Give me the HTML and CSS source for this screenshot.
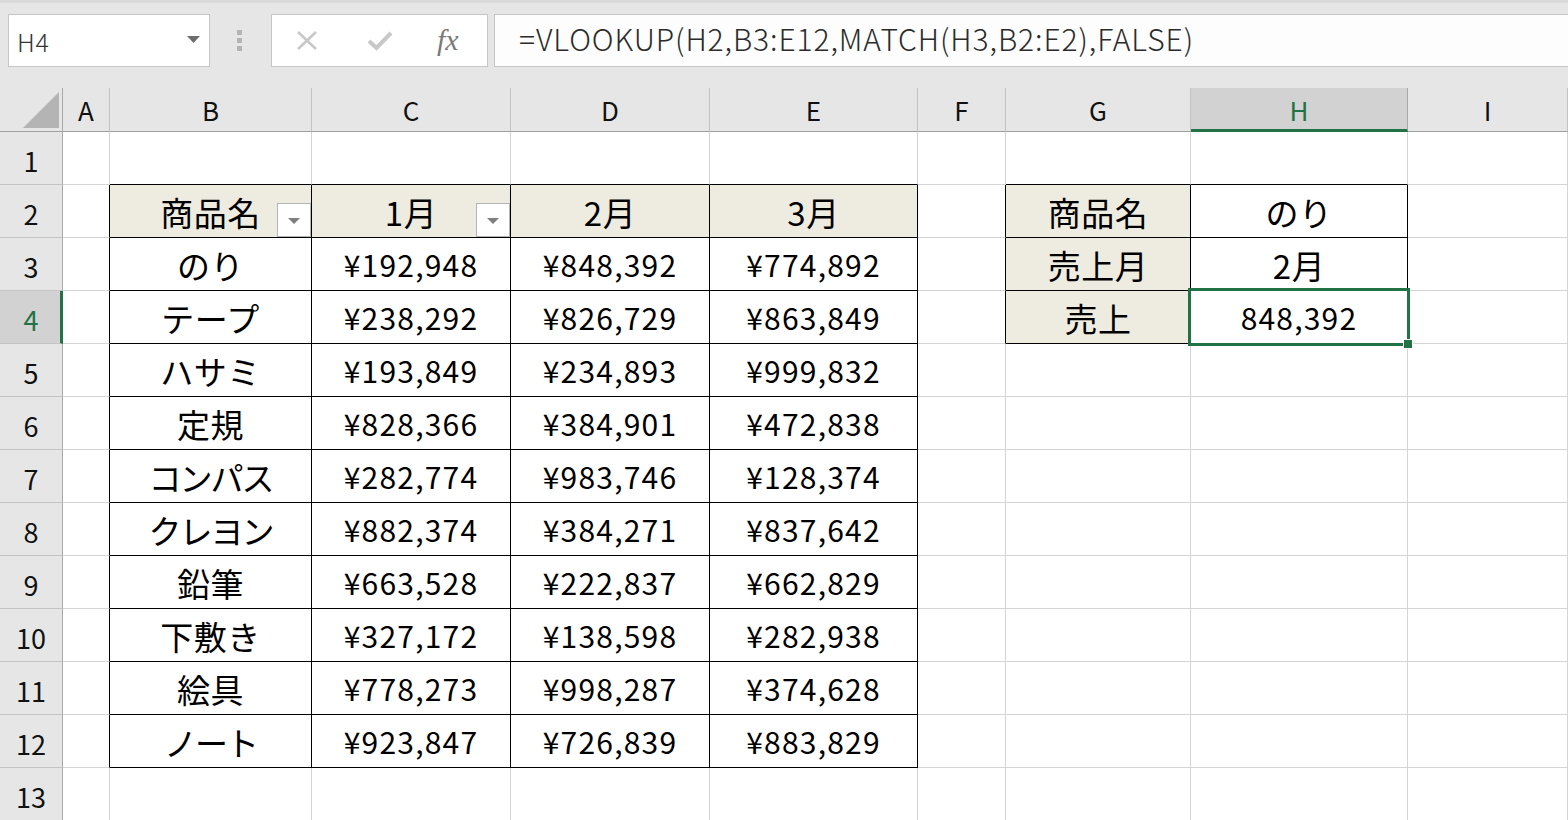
FILE: index.html
```html
<!DOCTYPE html>
<html lang="ja">
<head>
<meta charset="utf-8">
<title>売上検索</title>
<link rel="stylesheet" href="styles.css">
</head>
<body>
<div class="app">
  <div class="toolbar">
    <div class="namebox">
      <span class="name">H4</span>
      <svg class="caret" width="13" height="7" viewBox="0 0 13 7"><polygon points="0,0 13,0 6.5,7" fill="#6d6d6d"/></svg>
    </div>
    <div class="grip"><i></i><i></i><i></i></div>
    <div class="fxbox">
      <svg class="ico-x" width="22" height="21" viewBox="0 0 22 21"><path d="M2 2 L20 19 M20 2 L2 19" stroke="#c8c8c8" stroke-width="2.6" fill="none"/></svg>
      <svg class="ico-ok" width="26" height="21" viewBox="0 0 26 21"><path d="M2 11 L9.5 18 L24 3" stroke="#c8c8c8" stroke-width="4" fill="none"/></svg>
      <span class="fx">fx</span>
    </div>
    <div class="formula">=VLOOKUP(H2,B3:E12,MATCH(H3,B2:E2),FALSE)</div>
  </div>

  <div class="sheet">
    <!-- column headers -->
    <div class="corner"><svg width="62" height="43" viewBox="0 0 62 43"><polygon points="59,4 59,40 23,40" fill="#b4b4b4"/></svg></div>
    <div class="ch">A</div>
    <div class="ch">B</div>
    <div class="ch">C</div>
    <div class="ch">D</div>
    <div class="ch">E</div>
    <div class="ch">F</div>
    <div class="ch">G</div>
    <div class="ch sel">H</div>
    <div class="ch">I</div>

    <!-- row 1 -->
    <div class="rh">1</div>
    <div class="c"></div>
    <div class="c edge-b"></div><div class="c edge-b"></div><div class="c edge-b"></div><div class="c edge-b"></div>
    <div class="c"></div>
    <div class="c edge-b"></div><div class="c edge-b"></div>
    <div class="c"></div>

    <!-- row 2 -->
    <div class="rh">2</div>
    <div class="c edge-r"></div>
    <div class="c tb th jp">商品名<span class="filter"><svg width="12" height="6" viewBox="0 0 12 6"><polygon points="0,0 12,0 6,6" fill="#7f7f7f"/></svg></span></div>
    <div class="c tb th jp">1月<span class="filter"><svg width="12" height="6" viewBox="0 0 12 6"><polygon points="0,0 12,0 6,6" fill="#7f7f7f"/></svg></span></div>
    <div class="c tb th jp">2月</div>
    <div class="c tb th jp">3月</div>
    <div class="c edge-r"></div>
    <div class="c tb th jp">商品名</div>
    <div class="c tb jp">のり</div>
    <div class="c"></div>

    <!-- row 3 -->
    <div class="rh">3</div>
    <div class="c edge-r"></div>
    <div class="c tb jp">のり</div><div class="c tb">¥192,948</div><div class="c tb">¥848,392</div><div class="c tb">¥774,892</div>
    <div class="c edge-r"></div>
    <div class="c tb th jp">売上月</div>
    <div class="c tb jp">2月</div>
    <div class="c"></div>

    <!-- row 4 -->
    <div class="rh sel">4</div>
    <div class="c edge-r"></div>
    <div class="c tb jp">テープ</div><div class="c tb">¥238,292</div><div class="c tb">¥826,729</div><div class="c tb">¥863,849</div>
    <div class="c edge-r"></div>
    <div class="c tb th jp">売上</div>
    <div class="c tb">848,392</div>
    <div class="c"></div>

    <!-- row 5 -->
    <div class="rh">5</div>
    <div class="c edge-r"></div>
    <div class="c tb jp">ハサミ</div><div class="c tb">¥193,849</div><div class="c tb">¥234,893</div><div class="c tb">¥999,832</div>
    <div class="c"></div><div class="c"></div><div class="c"></div><div class="c"></div>

    <!-- row 6 -->
    <div class="rh">6</div>
    <div class="c edge-r"></div>
    <div class="c tb jp">定規</div><div class="c tb">¥828,366</div><div class="c tb">¥384,901</div><div class="c tb">¥472,838</div>
    <div class="c"></div><div class="c"></div><div class="c"></div><div class="c"></div>

    <!-- row 7 -->
    <div class="rh">7</div>
    <div class="c edge-r"></div>
    <div class="c tb jp kana">コンパス</div><div class="c tb">¥282,774</div><div class="c tb">¥983,746</div><div class="c tb">¥128,374</div>
    <div class="c"></div><div class="c"></div><div class="c"></div><div class="c"></div>

    <!-- row 8 -->
    <div class="rh">8</div>
    <div class="c edge-r"></div>
    <div class="c tb jp kana">クレヨン</div><div class="c tb">¥882,374</div><div class="c tb">¥384,271</div><div class="c tb">¥837,642</div>
    <div class="c"></div><div class="c"></div><div class="c"></div><div class="c"></div>

    <!-- row 9 -->
    <div class="rh">9</div>
    <div class="c edge-r"></div>
    <div class="c tb jp">鉛筆</div><div class="c tb">¥663,528</div><div class="c tb">¥222,837</div><div class="c tb">¥662,829</div>
    <div class="c"></div><div class="c"></div><div class="c"></div><div class="c"></div>

    <!-- row 10 -->
    <div class="rh">10</div>
    <div class="c edge-r"></div>
    <div class="c tb jp">下敷き</div><div class="c tb">¥327,172</div><div class="c tb">¥138,598</div><div class="c tb">¥282,938</div>
    <div class="c"></div><div class="c"></div><div class="c"></div><div class="c"></div>

    <!-- row 11 -->
    <div class="rh">11</div>
    <div class="c edge-r"></div>
    <div class="c tb jp">絵具</div><div class="c tb">¥778,273</div><div class="c tb">¥998,287</div><div class="c tb">¥374,628</div>
    <div class="c"></div><div class="c"></div><div class="c"></div><div class="c"></div>

    <!-- row 12 -->
    <div class="rh">12</div>
    <div class="c edge-r"></div>
    <div class="c tb jp kana">ノート</div><div class="c tb">¥923,847</div><div class="c tb">¥726,839</div><div class="c tb">¥883,829</div>
    <div class="c"></div><div class="c"></div><div class="c"></div><div class="c"></div>

    <!-- row 13 -->
    <div class="rh">13</div>
    <div class="c"></div><div class="c"></div><div class="c"></div><div class="c"></div><div class="c"></div>
    <div class="c"></div><div class="c"></div><div class="c"></div><div class="c"></div>

    <!-- active cell frame with fill handle -->
    <div class="selection"><span class="handle"></span></div>
  </div>
</div>
</body>
</html>
```

FILE: styles.css
```css
* { box-sizing: border-box; }

html, body {
  margin: 0;
  padding: 0;
  width: 1568px;
  height: 820px;
  overflow: hidden;
  background: #ffffff;
  font-family: "Noto Sans CJK JP", "Noto Sans", sans-serif;
}

.app {
  display: flex;
  flex-direction: column;
  width: 1568px;
  height: 820px;
  overflow: hidden;
}

/* ---------- formula bar ---------- */
.toolbar {
  flex: 0 0 88px;
  display: flex;
  align-items: flex-start;
  background: #e6e6e6;
  border-top: 3px solid #dadada;
  padding-top: 11px;
  overflow: hidden;
}

.namebox {
  margin-left: 8px;
  width: 202px;
  height: 53px;
  background: #ffffff;
  border: 1px solid #c6c6c6;
  display: flex;
  align-items: center;
  justify-content: space-between;
  padding: 0 9px 0 8px;
}

.name {
  font-size: 25px;
  font-weight: 300;
  color: #333333;
  letter-spacing: 0.8px;
}

.caret { margin-bottom: 3px; }

.grip {
  margin-left: 27px;
  width: 5px;
  display: flex;
  flex-direction: column;
  gap: 3px;
  padding-top: 16px;
}

.grip i {
  display: block;
  width: 5px;
  height: 5px;
  background: #b4b4b4;
}

.fxbox {
  margin-left: 29px;
  width: 217px;
  height: 53px;
  background: #ffffff;
  border: 1px solid #c6c6c6;
  display: flex;
  align-items: center;
  padding-left: 24px;
}

.ico-ok { margin-left: 49px; }

.fx {
  margin-left: 44px;
  font-family: "Liberation Serif", "DejaVu Serif", serif;
  font-style: italic;
  font-size: 30px;
  color: #7a7a7a;
  margin-top: -1px;
}

.formula {
  margin-left: 6px;
  flex: 1;
  height: 53px;
  margin-right: -2px;
  background: #fdfdfd;
  border: 1px solid #c6c6c6;
  padding: 0 0 5px 24px;
  display: flex;
  align-items: center;
  font-size: 30px;
  font-weight: 300;
  letter-spacing: 0.9px;
  color: #2b2b2b;
  white-space: nowrap;
}

/* ---------- sheet grid ---------- */
.sheet {
  position: relative;
  display: grid;
  grid-template-columns: 63px 47px 202px 199px 199px 208px 88px 185px 217px 160px;
  grid-template-rows: 44px repeat(13, 53px);
}

.corner {
  background: #e6e6e6;
  border-right: 1px solid #a9a9a9;
  border-bottom: 1px solid #a0a0a0;
}

.corner svg { display: block; }

.ch {
  background: #e6e6e6;
  border-right: 1px solid #c2c2c2;
  border-bottom: 1px solid #a0a0a0;
  display: flex;
  align-items: center;
  justify-content: center;
  font-size: 26px;
  color: #111111;
  padding-top: 0;
}

.ch.sel {
  background: #d2d2d2;
  color: #217346;
  border-right-color: #a9a9a9;
  border-bottom: 3px solid #217346;
  padding-top: 2px;
}

.rh {
  background: #e6e6e6;
  border-right: 1px solid #a9a9a9;
  border-bottom: 1px solid #c4c4c4;
  display: flex;
  align-items: center;
  justify-content: center;
  font-size: 27px;
  color: #111111;
  padding-top: 5px;
}

.rh.sel {
  background: #d2d2d2;
  color: #217346;
  border-right: 3px solid #217346;
  padding-left: 2px;
}

.c {
  position: relative;
  border-right: 1px solid #d4d4d4;
  border-bottom: 1px solid #d4d4d4;
  display: flex;
  align-items: center;
  justify-content: center;
  font-size: 30px;
  letter-spacing: 1.2px;
  color: #000000;
  padding-top: 0;
  white-space: nowrap;
}

.c.jp {
  font-size: 33px;
  letter-spacing: 0.5px;
  padding-top: 1px;
}

.c.jp.kana { letter-spacing: -2px; }

.c.edge-r { border-right-color: #000000; }
.c.edge-b { border-bottom-color: #000000; }

.c.tb {
  border-right-color: #000000;
  border-bottom-color: #000000;
}

.c.th { background: #eeece1; }

.filter {
  position: absolute;
  right: 0;
  bottom: 0;
  width: 34px;
  height: 34px;
  background: #ffffff;
  border: 1px solid #b3b3b3;
  display: flex;
  align-items: center;
  justify-content: center;
  padding-top: 2px;
}

.filter svg { display: block; }

.selection {
  position: absolute;
  left: 1188px;
  top: 200px;
  width: 222px;
  height: 58px;
  border: 3px solid #217346;
  pointer-events: none;
}

.handle {
  position: absolute;
  right: -6px;
  bottom: -6px;
  width: 10px;
  height: 10px;
  background: #217346;
  border: 1px solid #ffffff;
}
```
